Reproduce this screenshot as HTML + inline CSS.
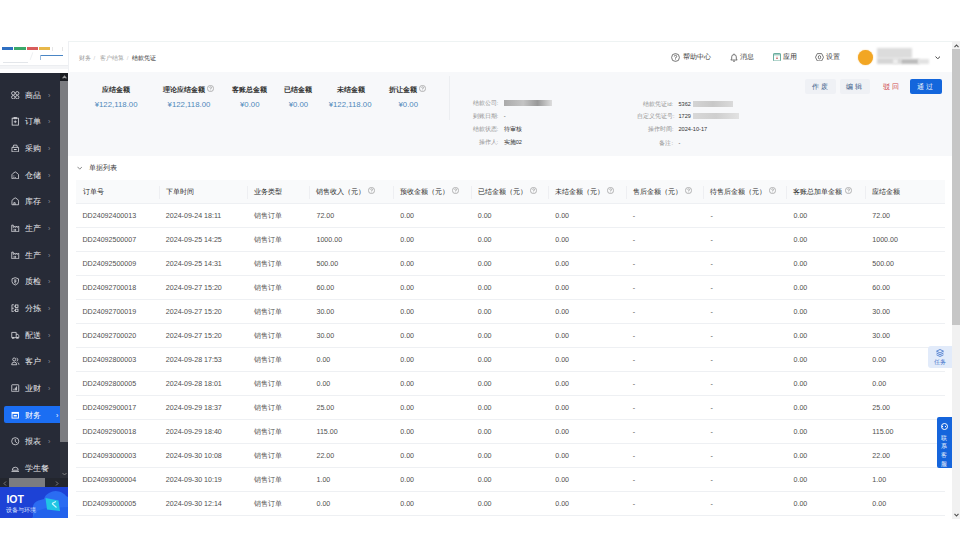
<!DOCTYPE html>
<html><head><meta charset="utf-8">
<style>
*{box-sizing:border-box;margin:0;padding:0}
html,body{width:960px;height:560px;overflow:hidden;background:#fff;font-family:"Liberation Sans",sans-serif;color:#333}
.a{position:absolute}
#hdr{left:0;top:40.5px;width:952px;height:32px;background:#fff;border-top:1px solid #eef3f3;border-bottom:1px solid #eceef2}
#logo{left:0;top:41px;width:69px;height:32px;border-right:1px solid #eef0f3;background:#fff}
.bar{position:absolute;top:47px;height:3.4px}
#side{left:0;top:73px;width:60px;height:405px;background:#272b37;overflow:hidden}
.mi{position:absolute;left:4px;width:56px;height:17px;color:#e8e9ec;font-size:8px;line-height:17px}
.mi .ic{position:absolute;left:7.2px;top:4.6px;width:8.5px;height:8.5px}
.mi .tx{position:absolute;left:21.3px;top:0.8px}
.mi .ar{position:absolute;left:44px;top:0.5px;color:#8a8d96;font-size:7px}
.mi.sel{background:#1b6ef3;border-radius:2px 0 0 2px;color:#fff}
.mi.sel .ar{left:52px}
.mi.sel .ar{color:#fff}
#vsb{left:60px;top:73px;width:8px;height:405px;background:#2d3039}
#hsb{left:0;top:478px;width:68px;height:9px;background:#23262e}
#iot{left:0;top:487px;width:68px;height:31.4px;background:#1d42d6;overflow:hidden}
#sum{left:68px;top:72px;width:884px;height:83.5px;background:#f7f8fa}
.sl{position:absolute;top:85px;font-size:7px;font-weight:bold;color:#333;line-height:10px;white-space:nowrap}
.sv{position:absolute;top:99.7px;font-size:7.8px;color:#4f88ba;line-height:10px;white-space:nowrap}
.dl{position:absolute;font-size:5.5px;color:#8f8f8f;line-height:8px;white-space:nowrap;text-align:right}
.dv{position:absolute;font-size:5.6px;color:#333;line-height:8px;white-space:nowrap}
.blur{position:absolute;height:6px;background:linear-gradient(90deg,#aaa,#c4c4c4 40%,#999 70%,#ddd)}
.btn{position:absolute;top:78.5px;height:15.2px;line-height:15.2px;font-size:6.5px;text-align:center;letter-spacing:2px;border-radius:2px}
.hi{position:absolute;top:52px;font-size:7px;line-height:10px;color:#333;white-space:nowrap}
.j{display:inline-block;text-align:justify;text-align-last:justify;white-space:nowrap;vertical-align:top}
table.grid{position:absolute;left:76px;top:180px;border-collapse:collapse;table-layout:fixed;width:868.5px}
table.grid th{height:23.3px;background:#f9fafb;font-weight:normal;text-align:left;font-size:7px;color:#2a2a2a;padding-left:6.5px;padding-top:1px;white-space:nowrap;position:relative;border-bottom:1px solid #eef0f3}
table.grid th+th:before{content:"";position:absolute;left:-0.5px;top:5.5px;height:13px;border-left:1px solid #eeeff2}
table.grid td{height:24px;font-size:7.1px;color:#505050;padding-left:6.5px;padding-top:2px;white-space:nowrap;border-bottom:1px solid #eef0f3}
svg.q{display:inline-block;width:7px;height:7px;margin-left:3px;vertical-align:-1.5px}
#psb{left:952px;top:41px;width:8px;height:477.6px;background:#f1f1f1}
</style></head><body>
<!-- header -->
<div id="hdr" class="a"></div>
<div id="logo" class="a">
</div>
<div class="bar" style="left:2px;width:11px;background:#2f6fc2"></div>
<div class="bar" style="left:14px;width:11.5px;background:#3aa86a"></div>
<div class="bar" style="left:26.5px;width:11.5px;background:#d85c5c"></div>
<div class="bar" style="left:38.5px;width:11.5px;background:#e8b84a"></div>
<div class="a" style="left:40px;top:54.8px;width:23px;height:1px;background:#4a86c5"></div>
<div class="a" style="left:40px;top:54.8px;width:0.8px;height:5px;background:#9bbbdd"></div>
<div class="a" style="left:3px;top:61.5px;width:25px;height:0.6px;background:#e3e6ea"></div>
<div class="a" style="left:0;top:65px;width:68px;height:3.8px;background:#f4f5f7;border-top:0.6px solid #eceef1"></div>
<div class="a" style="left:31px;top:52px;width:0.6px;height:8px;background:#eef0f2;transform:rotate(20deg)"></div>
<div class="a" style="left:52px;top:47px;width:0.8px;height:3.5px;background:#e6e6e6"></div>
<div class="a" style="left:62px;top:47px;width:0.8px;height:3.5px;background:#e6e6e6"></div>

<div class="a" style="left:78.6px;top:52.5px;font-size:6px;line-height:10px;color:#999;white-space:nowrap"><span class="j" style="width:12px">财务</span></div>
<div class="a" style="left:93.6px;top:52.5px;font-size:6px;line-height:10px;color:#ccc">/</div>
<div class="a" style="left:99.9px;top:52.5px;font-size:5.8px;line-height:10px;color:#999;white-space:nowrap"><span class="j" style="width:23.2px">客户结算</span></div>
<div class="a" style="left:126.8px;top:52.5px;font-size:6px;line-height:10px;color:#ccc">/</div>
<div class="a" style="left:132.4px;top:52.5px;font-size:5.9px;line-height:10px;color:#222;white-space:nowrap"><span class="j" style="width:23.6px">结款凭证</span></div>

<svg class="a" style="left:670.5px;top:52.5px" width="9" height="9" viewBox="0 0 9 9"><circle cx="4.5" cy="4.5" r="3.9" fill="none" stroke="#555" stroke-width="0.8"/><path d="M3.3 3.5 A1.2 1.2 0 1 1 4.5 4.7 V5.6" fill="none" stroke="#555" stroke-width="0.8"/><circle cx="4.5" cy="6.8" r="0.45" fill="#555"/></svg>
<div class="hi" style="left:682.8px"><span class="j" style="width:28px">帮助中心</span></div>
<svg class="a" style="left:729.5px;top:52.5px" width="8" height="9" viewBox="0 0 8 9"><path d="M0.8 7 L1.7 6 V3.9 A2.3 2.3 0 0 1 6.3 3.9 V6 L7.2 7 Z M4 0.6 V1.5 M3 8.2 H5" fill="none" stroke="#555" stroke-width="0.8"/></svg>
<div class="hi" style="left:740px"><span class="j" style="width:14px">消息</span></div>
<svg class="a" style="left:772.5px;top:52.8px" width="8" height="8.5" viewBox="0 0 8 8.5"><rect x="0.5" y="0.5" width="7" height="7.5" rx="0.6" fill="#fbfdfc" stroke="#5aa494" stroke-width="0.9"/><path d="M0.5 1.8 H7.5" stroke="#5aa494" stroke-width="0.8"/><path d="M4 3.6 V6 M3.1 5.1 L4 6 L4.9 5.1" fill="none" stroke="#c96060" stroke-width="0.7"/></svg>
<div class="hi" style="left:783px"><span class="j" style="width:14px">应用</span></div>
<svg class="a" style="left:815px;top:52.8px" width="9" height="8.5" viewBox="0 0 9 8.5"><path d="M2.3 0.6 H6.7 L8.5 4.25 L6.7 7.9 H2.3 L0.5 4.25 Z" fill="none" stroke="#555" stroke-width="0.8"/><ellipse cx="4.5" cy="4.25" rx="1.2" ry="1.7" fill="none" stroke="#555" stroke-width="0.8"/></svg>
<div class="hi" style="left:826px"><span class="j" style="width:14px">设置</span></div>
<div class="a" style="left:857.9px;top:49.5px;width:15.4px;height:15.6px;border-radius:50%;background:#f2a623;box-shadow:0 0 1.5px #f6c070"></div>
<div class="a" style="left:877px;top:48px;width:35px;height:10px;background:#dcdcdc;filter:blur(0.8px)"></div>
<div class="a" style="left:877px;top:58px;width:24px;height:6px;background:#d6d6d6;filter:blur(0.8px)"></div>
<div class="a" style="left:893px;top:59px;width:5px;height:5px;background:#eee;filter:blur(0.8px)"></div>
<div class="a" style="left:901px;top:58.7px;width:18px;height:5.3px;background:#bcbcbc;filter:blur(0.8px)"></div>
<div class="a" style="left:918px;top:58.7px;width:11px;height:5.3px;background:#e2e2e2;filter:blur(0.8px)"></div>
<svg class="a" style="left:934.5px;top:55.5px" width="5.5" height="3.5" viewBox="0 0 5.5 3.5"><path d="M0.5 0.6 L2.75 2.8 L5 0.6" fill="none" stroke="#444" stroke-width="1"/></svg>

<!-- sidebar -->
<div id="side" class="a">
<div class="mi" style="top:13.00px"><svg class="ic" viewBox="0 0 9 9"><g fill="none" stroke="#e8e9ec" stroke-width="0.8"><circle cx="2.4" cy="2.4" r="1.8"/><circle cx="6.6" cy="2.4" r="1.8"/><circle cx="2.4" cy="6.6" r="1.8"/><circle cx="6.6" cy="6.6" r="1.8"/></g></svg><span class="tx"><span class="j" style="width:16px">商品</span></span><span class="ar">›</span></div>
<div class="mi" style="top:39.67px"><svg class="ic" viewBox="0 0 9 9"><g fill="none" stroke="#e8e9ec" stroke-width="0.8"><rect x="1.2" y="1.2" width="6.6" height="7.4"/><path d="M3 0.5 H6 V1.8 H3 Z M4.5 3.5 V6.5 M3 5 H6"/></g></svg><span class="tx"><span class="j" style="width:16px">订单</span></span><span class="ar">›</span></div>
<div class="mi" style="top:66.33px"><svg class="ic" viewBox="0 0 9 9"><g fill="none" stroke="#e8e9ec" stroke-width="0.8"><path d="M1 3.6 H8 V8.3 H1 Z M2.2 3.6 L2.8 1.2 H6.2 L6.8 3.6"/></g><rect x="3" y="5.4" width="3" height="1" fill="#e8e9ec"/></svg><span class="tx"><span class="j" style="width:16px">采购</span></span><span class="ar">›</span></div>
<div class="mi" style="top:93.00px"><svg class="ic" viewBox="0 0 9 9"><g fill="none" stroke="#e8e9ec" stroke-width="0.8"><path d="M1 8.2 V4.2 Q1 3.4 1.8 2.8 L4.5 0.9 L7.2 2.8 Q8 3.4 8 4.2 V8.2 Z"/></g><g fill="#e8e9ec"><rect x="2.6" y="4.8" width="0.9" height="0.9"/><rect x="2.6" y="6.4" width="0.9" height="0.9"/><rect x="4.1" y="6.4" width="0.9" height="0.9"/></g></svg><span class="tx"><span class="j" style="width:16px">仓储</span></span><span class="ar">›</span></div>
<div class="mi" style="top:119.67px"><svg class="ic" viewBox="0 0 9 9"><g fill="none" stroke="#e8e9ec" stroke-width="0.8"><path d="M1 8.2 V4.5 Q1 3.2 2.2 2.3 L4.5 0.9 L6.8 2.3 Q8 3.2 8 4.5 V8.2 Z M3 8.2 V6 H4.4 V8.2"/></g></svg><span class="tx"><span class="j" style="width:16px">库存</span></span><span class="ar">›</span></div>
<div class="mi" style="top:146.34px"><svg class="ic" viewBox="0 0 9 9"><g fill="none" stroke="#e8e9ec" stroke-width="0.8"><path d="M0.8 8.2 V1.2 H2.4 V3.6 L4.4 2.4 V3.6 L6.4 2.4 V3.6 L8.2 2.4 V8.2 Z"/></g><g fill="#e8e9ec"><rect x="2.8" y="5.2" width="1" height="1"/><rect x="4.4" y="5.2" width="1" height="1"/><rect x="2.8" y="6.6" width="1" height="1"/><rect x="4.4" y="6.6" width="1" height="1"/></g></svg><span class="tx"><span class="j" style="width:16px">生产</span></span><span class="ar">›</span></div>
<div class="mi" style="top:173.00px"><svg class="ic" viewBox="0 0 9 9"><g fill="none" stroke="#e8e9ec" stroke-width="0.8"><path d="M0.8 8.2 V1.2 H2.4 V3.6 L4.4 2.4 V3.6 L6.4 2.4 V3.6 L8.2 2.4 V8.2 Z"/></g><g fill="#e8e9ec"><rect x="2.8" y="5.2" width="1" height="1"/><rect x="4.4" y="5.2" width="1" height="1"/><rect x="2.8" y="6.6" width="1" height="1"/><rect x="4.4" y="6.6" width="1" height="1"/></g></svg><span class="tx"><span class="j" style="width:16px">生产</span></span><span class="ar">›</span></div>
<div class="mi" style="top:199.67px"><svg class="ic" viewBox="0 0 9 9"><g fill="none" stroke="#e8e9ec" stroke-width="0.8"><path d="M4.5 0.7 L7.9 1.9 V4.8 Q7.9 7.4 4.5 8.5 Q1.1 7.4 1.1 4.8 V1.9 Z M3.4 3.1 H5.6 M3.4 4.2 H5.6 Q5.2 5.2 3.6 5.4 L5.4 6.9"/></g></svg><span class="tx"><span class="j" style="width:16px">质检</span></span><span class="ar">›</span></div>
<div class="mi" style="top:226.34px"><svg class="ic" viewBox="0 0 9 9"><g fill="none" stroke="#e8e9ec" stroke-width="0.8"><path d="M3 0.8 H1 V8.2 H3 M1 4.5 H3"/><rect x="4.6" y="1" width="2.8" height="2.6"/><rect x="4.6" y="5.4" width="2.8" height="2.6"/><path d="M3 2.3 H4.6 M3 6.7 H4.6"/></g></svg><span class="tx"><span class="j" style="width:16px">分拣</span></span><span class="ar">›</span></div>
<div class="mi" style="top:253.00px"><svg class="ic" viewBox="0 0 9 9"><g fill="none" stroke="#e8e9ec" stroke-width="0.8"><path d="M0.8 1.5 H5.5 V7 H0.8 Z M5.5 3.5 H7.4 L8.3 5 V7 H5.5"/><circle cx="2.3" cy="7.6" r="0.8"/><circle cx="6.8" cy="7.6" r="0.8"/></g></svg><span class="tx"><span class="j" style="width:16px">配送</span></span><span class="ar">›</span></div>
<div class="mi" style="top:279.67px"><svg class="ic" viewBox="0 0 9 9"><g fill="none" stroke="#e8e9ec" stroke-width="0.8"><circle cx="3.4" cy="2.6" r="1.6"/><path d="M0.7 8.2 Q0.7 5.4 3.4 5.4 Q6.1 5.4 6.1 8.2 Z M5.9 1.2 Q7.2 1.5 7.2 2.8 Q7.2 4 6 4.3 M6.9 5.6 Q8.4 6.2 8.4 8.2"/></g></svg><span class="tx"><span class="j" style="width:16px">客户</span></span><span class="ar">›</span></div>
<div class="mi" style="top:306.34px"><svg class="ic" viewBox="0 0 9 9"><g fill="none" stroke="#e8e9ec" stroke-width="0.8"><rect x="0.8" y="0.8" width="7.4" height="7.4" rx="0.5"/></g><g fill="#e8e9ec"><rect x="2.7" y="5" width="0.9" height="1.8"/><rect x="4.1" y="3.8" width="0.9" height="3"/><rect x="5.5" y="2.6" width="0.9" height="4.2"/></g></svg><span class="tx"><span class="j" style="width:16px">业财</span></span><span class="ar">›</span></div>
<div class="mi sel" style="top:333.00px"><svg class="ic" viewBox="0 0 9 9"><g><rect x="0.6" y="1" width="7.8" height="7" fill="#fff"/><rect x="1.6" y="3" width="5.8" height="4" fill="#1b6ef3"/><rect x="2.8" y="4.2" width="3.4" height="1.6" fill="#fff"/></g></svg><span class="tx"><span class="j" style="width:16px">财务</span></span><span class="ar">›</span></div>
<div class="mi" style="top:359.67px"><svg class="ic" viewBox="0 0 9 9"><g fill="none" stroke="#e8e9ec" stroke-width="0.8"><circle cx="4.5" cy="4.5" r="3.8"/><path d="M4.5 2.2 V4.7 L6.3 6.2"/></g></svg><span class="tx"><span class="j" style="width:16px">报表</span></span><span class="ar">›</span></div>
<div class="mi" style="top:386.34px"><svg class="ic" viewBox="0 0 9 9"><g fill="none" stroke="#e8e9ec" stroke-width="0.8"><path d="M1.3 6.6 A3.2 3.2 0 0 1 7.7 6.6 Z M0.5 8 H8.5"/></g></svg><span class="tx"><span class="j" style="width:24px">学生餐</span></span></div>
</div>
<div id="vsb" class="a">
  <div class="a" style="left:0;top:0;width:8.2px;height:8px;background:#1a1c21"></div>
  <svg class="a" style="left:1.6px;top:2.4px" width="5" height="4" viewBox="0 0 5 4"><path d="M0.6 3.3 L2.5 1.2 L4.4 3.3" fill="none" stroke="#9a9a9a" stroke-width="1.2"/></svg>
  <div class="a" style="left:0;top:8px;width:8.2px;height:360.5px;background:#7b7c80"></div>
  <svg class="a" style="left:1.5px;top:399px" width="5" height="4" viewBox="0 0 5 4"><path d="M0.5 1 L2.5 3 L4.5 1" fill="none" stroke="#888" stroke-width="0.9"/></svg>
</div>
<div id="hsb" class="a">
  <svg class="a" style="left:2.5px;top:2.5px" width="4" height="5" viewBox="0 0 4 5"><path d="M3 0.5 L1 2.5 L3 4.5" fill="none" stroke="#888" stroke-width="0.9"/></svg>
  <div class="a" style="left:8.8px;top:0;width:36.2px;height:8.7px;background:#7b7c80"></div>
  <svg class="a" style="left:54.5px;top:2.5px" width="4" height="5" viewBox="0 0 4 5"><path d="M1 0.5 L3 2.5 L1 4.5" fill="none" stroke="#888" stroke-width="0.9"/></svg>
</div>
<div id="iot" class="a">
  <svg class="a" style="left:0;top:0" width="68" height="32" viewBox="0 0 68 32">
    <path d="M33 32 V19 Q34 15 38.5 13.5 L44 12 Q45 8 49 6 Q54 3 59 4.5 Q64 6 66 9 L68 10 V32 Z" fill="#2b6cf2"/>
    <path d="M31 32 L37 24 L46 21 L68 20 V32 Z" fill="#2160ea" opacity="0.8"/>
    <path d="M45.5 11 L58.5 13.5 L60 24 L47 22.5 Z" fill="#20c6e4"/>
    <path d="M52 16.5 L56 14.5 M52 16.5 L56.5 20.5" stroke="#c8f6ff" stroke-width="1.1" fill="none"/>
  </svg>
  <div class="a" style="left:6.4px;top:7px;font-size:10.5px;font-weight:bold;color:#fff;line-height:11px">IOT</div>
  <div class="a" style="left:6.4px;top:19.8px;font-size:5.8px;color:#dfe6ff;line-height:7px;white-space:nowrap"><span class="j" style="width:29.4px">设备与环境</span></div>
</div>

<!-- summary -->
<div id="sum" class="a"></div>
<div class="sl" style="left:102.4px"><span class="j" style="width:28px">应结金额</span></div>
<div class="sv" style="left:94.7px">¥122,118.00</div>
<div class="sl" style="left:163.4px"><span class="j" style="width:42px">理论应结金额</span><svg class="q" style="margin-left:1.5px;vertical-align:0" viewBox="0 0 7 7"><circle cx="3.5" cy="3.5" r="3.1" fill="none" stroke="#8a8a8a" stroke-width="0.6"/><path d="M2.6 2.7 A0.95 0.95 0 1 1 3.5 3.7 V4.2" fill="none" stroke="#8a8a8a" stroke-width="0.6"/><circle cx="3.5" cy="5.1" r="0.35" fill="#8a8a8a"/></svg></div>
<div class="sv" style="left:167.6px">¥122,118.00</div>
<div class="sl" style="left:231.5px"><span class="j" style="width:35px">客账总金额</span></div>
<div class="sv" style="left:240px">¥0.00</div>
<div class="sl" style="left:284px"><span class="j" style="width:28px">已结金额</span></div>
<div class="sv" style="left:288.7px">¥0.00</div>
<div class="sl" style="left:336.7px"><span class="j" style="width:28px">未结金额</span></div>
<div class="sv" style="left:328.7px">¥122,118.00</div>
<div class="sl" style="left:389px"><span class="j" style="width:28px">折让金额</span><svg class="q" style="margin-left:1.5px;vertical-align:0" viewBox="0 0 7 7"><circle cx="3.5" cy="3.5" r="3.1" fill="none" stroke="#8a8a8a" stroke-width="0.6"/><path d="M2.6 2.7 A0.95 0.95 0 1 1 3.5 3.7 V4.2" fill="none" stroke="#8a8a8a" stroke-width="0.6"/><circle cx="3.5" cy="5.1" r="0.35" fill="#8a8a8a"/></svg></div>
<div class="sv" style="left:398.5px">¥0.00</div>
<div class="a" style="left:448.5px;top:76px;width:1px;height:44px;background:#eceef1"></div>

<div class="dl" style="left:440px;width:58px;top:98.7px"><span class="j" style="width:25.3px">结款公司:</span></div>
<div class="blur" style="left:504px;top:100px;width:48px"></div>
<div class="dl" style="left:440px;width:58px;top:112.3px"><span class="j" style="width:25.3px">到账日期:</span></div>
<div class="dv" style="left:503.7px;top:112.3px">-</div>
<div class="dl" style="left:440px;width:58px;top:125.3px"><span class="j" style="width:25.3px">结款状态:</span></div>
<div class="dv" style="left:503.7px;top:125.3px"><span class="j" style="width:17.6px">待审核</span></div>
<div class="dl" style="left:440px;width:58px;top:138px"><span class="j" style="width:19.5px">操作人:</span></div>
<div class="dv" style="left:503.7px;top:138px"><span class="j" style="width:18px">实施02</span></div>

<div class="dl" style="left:600px;width:73px;top:99.8px"><span class="j" style="width:30px">结款凭证id:</span></div>
<div class="dv" style="left:678.5px;top:99.8px">5362</div>
<div class="blur" style="left:693px;top:101px;width:40px;background:linear-gradient(90deg,#d4d4d4,#c8c8c8 50%,#dadada)"></div>
<div class="dl" style="left:600px;width:73px;top:111.5px"><span class="j" style="width:36px">自定义凭证号:</span></div>
<div class="dv" style="left:678.5px;top:111.5px">1729</div>
<div class="blur" style="left:693px;top:112.5px;width:46px;background:linear-gradient(90deg,#d8d8d8,#cfcfcf 50%,#e2e2e2)"></div>
<div class="dl" style="left:600px;width:73px;top:125px"><span class="j" style="width:25px">操作时间:</span></div>
<div class="dv" style="left:678.5px;top:125px">2024-10-17</div>
<div class="dl" style="left:600px;width:73px;top:138.8px"><span class="j" style="width:14px">备注:</span></div>
<div class="dv" style="left:678.5px;top:138.8px">-</div>

<div class="btn" style="left:805.3px;width:30.5px;background:#eff1f5;color:#46678f">作废</div>
<div class="btn" style="left:840.3px;width:29.7px;background:#eff1f5;color:#2f5584">编辑</div>
<div class="btn" style="left:876.5px;width:30px;color:#cf4a4a">驳回</div>
<div class="btn" style="left:910px;width:32px;background:#1366dc;color:#fff">通过</div>

<!-- table -->
<svg class="a" style="left:76.8px;top:166px" width="5.5" height="4" viewBox="0 0 5.5 4"><path d="M0.5 0.8 L2.75 3.2 L5 0.8" fill="none" stroke="#666" stroke-width="0.75"/></svg>
<div class="a" style="left:88.5px;top:163px;font-size:6.9px;line-height:10px;color:#333"><span class="j" style="width:27.6px">单据列表</span></div>
<table class='grid'><colgroup><col style="width:83.30px"><col style="width:88.20px"><col style="width:62.50px"><col style="width:83.75px"><col style="width:77.50px"><col style="width:77.50px"><col style="width:77.50px"><col style="width:77.75px"><col style="width:83.00px"><col style="width:78.80px"><col style="width:78.70px"></colgroup><tr class='h'><th><span><span class="j" style="width:21px">订单号</span></span></th><th><span><span class="j" style="width:28px">下单时间</span></span></th><th><span><span class="j" style="width:28px">业务类型</span></span></th><th><span><span class="j" style="width:49px">销售收入（元）</span><svg class="q" viewBox="0 0 7 7"><circle cx="3.5" cy="3.5" r="3.1" fill="none" stroke="#8a8a8a" stroke-width="0.6"/><path d="M2.6 2.7 A0.95 0.95 0 1 1 3.5 3.7 V4.2" fill="none" stroke="#8a8a8a" stroke-width="0.6"/><circle cx="3.5" cy="5.1" r="0.35" fill="#8a8a8a"/></svg></span></th><th><span><span class="j" style="width:49px">预收金额（元）</span><svg class="q" viewBox="0 0 7 7"><circle cx="3.5" cy="3.5" r="3.1" fill="none" stroke="#8a8a8a" stroke-width="0.6"/><path d="M2.6 2.7 A0.95 0.95 0 1 1 3.5 3.7 V4.2" fill="none" stroke="#8a8a8a" stroke-width="0.6"/><circle cx="3.5" cy="5.1" r="0.35" fill="#8a8a8a"/></svg></span></th><th><span><span class="j" style="width:49px">已结金额（元）</span><svg class="q" viewBox="0 0 7 7"><circle cx="3.5" cy="3.5" r="3.1" fill="none" stroke="#8a8a8a" stroke-width="0.6"/><path d="M2.6 2.7 A0.95 0.95 0 1 1 3.5 3.7 V4.2" fill="none" stroke="#8a8a8a" stroke-width="0.6"/><circle cx="3.5" cy="5.1" r="0.35" fill="#8a8a8a"/></svg></span></th><th><span><span class="j" style="width:49px">未结金额（元）</span><svg class="q" viewBox="0 0 7 7"><circle cx="3.5" cy="3.5" r="3.1" fill="none" stroke="#8a8a8a" stroke-width="0.6"/><path d="M2.6 2.7 A0.95 0.95 0 1 1 3.5 3.7 V4.2" fill="none" stroke="#8a8a8a" stroke-width="0.6"/><circle cx="3.5" cy="5.1" r="0.35" fill="#8a8a8a"/></svg></span></th><th><span><span class="j" style="width:49px">售后金额（元）</span><svg class="q" viewBox="0 0 7 7"><circle cx="3.5" cy="3.5" r="3.1" fill="none" stroke="#8a8a8a" stroke-width="0.6"/><path d="M2.6 2.7 A0.95 0.95 0 1 1 3.5 3.7 V4.2" fill="none" stroke="#8a8a8a" stroke-width="0.6"/><circle cx="3.5" cy="5.1" r="0.35" fill="#8a8a8a"/></svg></span></th><th><span><span class="j" style="width:56px">待售后金额（元）</span><svg class="q" viewBox="0 0 7 7"><circle cx="3.5" cy="3.5" r="3.1" fill="none" stroke="#8a8a8a" stroke-width="0.6"/><path d="M2.6 2.7 A0.95 0.95 0 1 1 3.5 3.7 V4.2" fill="none" stroke="#8a8a8a" stroke-width="0.6"/><circle cx="3.5" cy="5.1" r="0.35" fill="#8a8a8a"/></svg></span></th><th><span><span class="j" style="width:49px">客账总加单金额</span><svg class="q" viewBox="0 0 7 7"><circle cx="3.5" cy="3.5" r="3.1" fill="none" stroke="#8a8a8a" stroke-width="0.6"/><path d="M2.6 2.7 A0.95 0.95 0 1 1 3.5 3.7 V4.2" fill="none" stroke="#8a8a8a" stroke-width="0.6"/><circle cx="3.5" cy="5.1" r="0.35" fill="#8a8a8a"/></svg></span></th><th><span><span class="j" style="width:28px">应结金额</span></span></th></tr><tr><td>DD24092400013</td><td>2024-09-24 18:11</td><td><span class="j" style="width:28px">销售订单</span></td><td>72.00</td><td>0.00</td><td>0.00</td><td>0.00</td><td>-</td><td>-</td><td>0.00</td><td>72.00</td></tr><tr><td>DD24092500007</td><td>2024-09-25 14:25</td><td><span class="j" style="width:28px">销售订单</span></td><td>1000.00</td><td>0.00</td><td>0.00</td><td>0.00</td><td>-</td><td>-</td><td>0.00</td><td>1000.00</td></tr><tr><td>DD24092500009</td><td>2024-09-25 14:31</td><td><span class="j" style="width:28px">销售订单</span></td><td>500.00</td><td>0.00</td><td>0.00</td><td>0.00</td><td>-</td><td>-</td><td>0.00</td><td>500.00</td></tr><tr><td>DD24092700018</td><td>2024-09-27 15:20</td><td><span class="j" style="width:28px">销售订单</span></td><td>60.00</td><td>0.00</td><td>0.00</td><td>0.00</td><td>-</td><td>-</td><td>0.00</td><td>60.00</td></tr><tr><td>DD24092700019</td><td>2024-09-27 15:20</td><td><span class="j" style="width:28px">销售订单</span></td><td>30.00</td><td>0.00</td><td>0.00</td><td>0.00</td><td>-</td><td>-</td><td>0.00</td><td>30.00</td></tr><tr><td>DD24092700020</td><td>2024-09-27 15:20</td><td><span class="j" style="width:28px">销售订单</span></td><td>30.00</td><td>0.00</td><td>0.00</td><td>0.00</td><td>-</td><td>-</td><td>0.00</td><td>30.00</td></tr><tr><td>DD24092800003</td><td>2024-09-28 17:53</td><td><span class="j" style="width:28px">销售订单</span></td><td>0.00</td><td>0.00</td><td>0.00</td><td>0.00</td><td>-</td><td>-</td><td>0.00</td><td>0.00</td></tr><tr><td>DD24092800005</td><td>2024-09-28 18:01</td><td><span class="j" style="width:28px">销售订单</span></td><td>0.00</td><td>0.00</td><td>0.00</td><td>0.00</td><td>-</td><td>-</td><td>0.00</td><td>0.00</td></tr><tr><td>DD24092900017</td><td>2024-09-29 18:37</td><td><span class="j" style="width:28px">销售订单</span></td><td>25.00</td><td>0.00</td><td>0.00</td><td>0.00</td><td>-</td><td>-</td><td>0.00</td><td>25.00</td></tr><tr><td>DD24092900018</td><td>2024-09-29 18:40</td><td><span class="j" style="width:28px">销售订单</span></td><td>115.00</td><td>0.00</td><td>0.00</td><td>0.00</td><td>-</td><td>-</td><td>0.00</td><td>115.00</td></tr><tr><td>DD24093000003</td><td>2024-09-30 10:08</td><td><span class="j" style="width:28px">销售订单</span></td><td>22.00</td><td>0.00</td><td>0.00</td><td>0.00</td><td>-</td><td>-</td><td>0.00</td><td>22.00</td></tr><tr><td>DD24093000004</td><td>2024-09-30 10:19</td><td><span class="j" style="width:28px">销售订单</span></td><td>1.00</td><td>0.00</td><td>0.00</td><td>0.00</td><td>-</td><td>-</td><td>0.00</td><td>1.00</td></tr><tr><td>DD24093000005</td><td>2024-09-30 12:14</td><td><span class="j" style="width:28px">销售订单</span></td><td>0.00</td><td>0.00</td><td>0.00</td><td>0.00</td><td>-</td><td>-</td><td>0.00</td><td>0.00</td></tr></table>

<!-- page scrollbar -->
<div id="psb" class="a">
  <svg class="a" style="left:1.5px;top:2.5px" width="5" height="4" viewBox="0 0 5 4"><path d="M0.5 3.2 L2.5 1 L4.5 3.2" fill="none" stroke="#505050" stroke-width="1.1"/></svg>
  <div class="a" style="left:0;top:8px;width:8px;height:275.6px;background:#c6c6c6"></div>
  <svg class="a" style="left:1.8px;top:472.3px" width="5" height="4" viewBox="0 0 5 4"><path d="M0.5 0.8 L2.5 3 L4.5 0.8" fill="none" stroke="#505050" stroke-width="1.1"/></svg>
</div>

<!-- floats -->
<div class="a" style="left:928.2px;top:346px;width:23.6px;height:22.2px;background:#e2ebfa;border-radius:3px 0 0 3px"></div>
<svg class="a" style="left:936px;top:349px" width="8" height="8" viewBox="0 0 8 8"><path d="M4 0.5 L7.5 2.2 L4 3.9 L0.5 2.2 Z M0.5 4 L4 5.7 L7.5 4 M0.5 5.8 L4 7.5 L7.5 5.8" fill="none" stroke="#3b6fc9" stroke-width="0.8"/></svg>
<div class="a" style="left:934px;top:359px;font-size:5.6px;line-height:7px;color:#3b6fc9"><span class="j" style="width:11.4px">任务</span></div>
<div class="a" style="left:936.6px;top:417.2px;width:15.3px;height:51.3px;background:#1565dc;border-radius:2px 0 0 2px"></div>
<div class="a" style="left:940.5px;top:422.7px;width:7px;height:7px;border:0.8px solid #fff;border-radius:50%"></div><div class="a" style="left:942.3px;top:425.7px;width:3.4px;height:0.9px;border-left:0.9px solid #fff;border-right:0.9px solid #fff"></div>
<div class="a" style="left:941px;top:433.5px;width:6px;font-size:6px;line-height:8.8px;color:#fff;text-align:center">联系客服</div>
</body></html>
